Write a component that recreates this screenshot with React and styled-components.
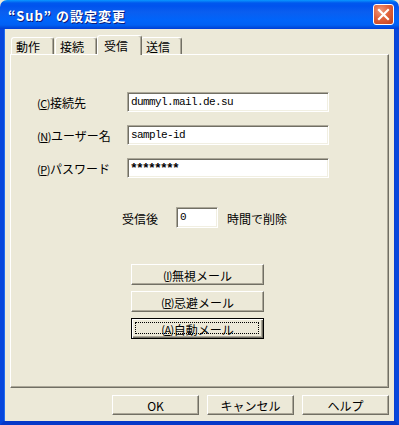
import React from 'react';
import styled, { createGlobalStyle } from 'styled-components';

const Global = createGlobalStyle`
  html, body {
    margin: 0;
    padding: 0;
    background: #ece9d8;
  }
  * { box-sizing: border-box; }
`;

const ui = `"Noto Sans CJK JP", "DejaVu Sans", sans-serif`;

const Window = styled.div`
  width: 399px;
  height: 425px;
  display: flex;
  flex-direction: column;
  font-family: ${ui};
  font-size: 12px;
  color: #000;
`;

const TitleBar = styled.div`
  height: 29px;
  flex: none;
  display: flex;
  align-items: center;
  justify-content: space-between;
  padding: 0 5px 0 8px;
  border-radius: 7px 7px 0 0;
  background: linear-gradient(to bottom,
    #0997ff 0px, #0058ee 3px, #0053ee 6px, #0a5ef0 12px,
    #0064fa 20px, #0060f4 25px, #0050e0 27px, #003dd7 29px);
`;

const Title = styled.span`
  color: #fff;
  font-weight: bold;
  font-size: 13px;
  letter-spacing: 1px;
  text-shadow: 1px 1px 0 #0a1b7a;
  margin-top: 1px;
`;

const CloseBtn = styled.div`
  width: 21px;
  height: 21px;
  border: 1px solid #fff;
  border-radius: 3px;
  background: radial-gradient(circle at 35% 30%, #f09a7c 0%, #e0623c 45%, #c0401c 100%);
  display: flex;
  align-items: center;
  justify-content: center;
`;

const Body = styled.div`
  flex: 1;
  display: flex;
  flex-direction: column;
  background: #ece9d8;
  border-left: 4px solid #0646dc;
  border-right: 4px solid #0646dc;
  border-bottom: 4px solid #0638c8;
  box-shadow: inset 1px 0 0 #1f6cf0, inset -1px 0 0 #0a3fd0;
  padding: 6px 5px 0 6px;
`;

const TabRow = styled.div`
  display: flex;
  align-items: flex-end;
  height: 19px;
  padding-left: 1px;
  position: relative;
  z-index: 1;
`;

const Tab = styled.div`
  width: ${p => p.$w}px;
  height: ${p => (p.$active ? 20 : 17)}px;
  margin-left: ${p => (p.$active ? -1 : 0)}px;
  margin-right: ${p => (p.$active ? -1 : 1)}px;
  margin-bottom: ${p => (p.$active ? -1 : 0)}px;
  background: #ece9d8;
  border-top: 1px solid #fff;
  border-left: 1px solid #fff;
  border-right: 1px solid #716f64;
  box-shadow: inset -1px 0 0 #aca899;
  border-radius: 3px 3px 0 0;
  display: flex;
  align-items: center;
  padding-left: ${p => (p.$active ? 6 : 4)}px;
  padding-top: ${p => (p.$active ? 0 : 1)}px;
  position: relative;
  z-index: ${p => (p.$active ? 2 : 0)};
`;

const Panel = styled.div`
  width: 379px;
  height: 334px;
  border-top: 1px solid #fff;
  border-left: 1px solid #fff;
  border-right: 1px solid #716f64;
  border-bottom: 1px solid #716f64;
  box-shadow: inset -1px -1px 0 #aca899;
  padding: 37px 0 0 26px;
  display: flex;
  flex-direction: column;
`;

const Fields = styled.div`
  display: grid;
  grid-template-columns: 90px 202px;
  row-gap: 13px;
  align-items: center;
`;

const Label = styled.span`
  white-space: nowrap;
  padding-top: 1px;
`;

const Field = styled.div`
  height: ${p => p.$h || 20}px;
  width: ${p => p.$w || 202}px;
  background: #fff;
  border-top: 1px solid #aca899;
  border-left: 1px solid #aca899;
  border-right: 1px solid #fff;
  border-bottom: 1px solid #fff;
  box-shadow: inset 1px 1px 0 #716f64, inset -1px -1px 0 #f1efe2;
  padding: ${p => (p.$mask ? '2px 0 0 2px' : '1px 0 0 3px')};
  font-family: "Liberation Mono", "DejaVu Sans Mono", monospace;
  font-size: ${p => (p.$mask ? 13 : 11)}px;
  font-weight: ${p => (p.$mask ? 'bold' : 'normal')};
  letter-spacing: ${p => (p.$mask ? -1.8 : -0.6)}px;
  line-height: 16px;
  white-space: nowrap;
  overflow: hidden;
`;

const DeleteRow = styled.div`
  display: flex;
  align-items: center;
  margin: 29px 0 0 85px;
`;

const Inline = styled.span`
  margin: ${p => p.$m || '0'};
  padding-top: 1px;
`;

const ButtonStack = styled.div`
  display: flex;
  flex-direction: column;
  gap: 6px;
  margin: 36px 0 0 94px;
`;

const Button = styled.div`
  width: ${p => p.$w || 133}px;
  height: ${p => p.$h || 21}px;
  background: #ece9d8;
  border-top: 1px solid #fff;
  border-left: 1px solid #fff;
  border-right: 1px solid #716f64;
  border-bottom: 1px solid #716f64;
  box-shadow: inset -1px -1px 0 #aca899;
  display: flex;
  align-items: center;
  justify-content: center;
  padding-top: 1px;
  position: relative;
  ${p => p.$default && `
    border: 1px solid #000;
    box-shadow: inset 1px 1px 0 #fff, inset -1px -1px 0 #716f64, inset -2px -2px 0 #aca899;
    &::after {
      content: '';
      position: absolute;
      left: 3px; top: 3px; right: 4px; bottom: 4px;
      border: 1px dotted #000;
    }
  `}
`;

const Footer = styled.div`
  display: flex;
  justify-content: flex-end;
  gap: 8px;
  margin-top: 7px;
  width: 379px;
`;

const Paren = styled.span`
  font-size: 11px;
  letter-spacing: -0.5px;
`;

const Key = ({ k }) => (
  <Paren>(<u>{k}</u>)</Paren>
);

function CloseIcon() {
  return (
    <svg width="13" height="13" viewBox="0 0 13 13">
      <path d="M2 2 L11 11 M11 2 L2 11" stroke="#fff" strokeWidth="2.2" strokeLinecap="square" />
    </svg>
  );
}

export default function App() {
  return (
    <>
      <Global />
      <Window>
        <TitleBar>
          <Title>“Sub” の設定変更</Title>
          <CloseBtn><CloseIcon /></CloseBtn>
        </TitleBar>
        <Body>
          <TabRow>
            <Tab $w={43}>動作</Tab>
            <Tab $w={42}>接続</Tab>
            <Tab $w={45} $active>受信</Tab>
            <Tab $w={41}>送信</Tab>
          </TabRow>
          <Panel>
            <Fields>
              <Label><Key k="C" />接続先</Label>
              <Field>dummyl.mail.de.su</Field>
              <Label><Key k="N" />ユーザー名</Label>
              <Field>sample-id</Field>
              <Label><Key k="P" />パスワード</Label>
              <Field $mask>********</Field>
            </Fields>
            <DeleteRow>
              <Inline>受信後</Inline>
              <Field $w={42} $h={21} style={{ marginLeft: 18 }}>0</Field>
              <Inline $m="0 0 0 9px">時間で削除</Inline>
            </DeleteRow>
            <ButtonStack>
              <Button><Key k="I" />無視メール</Button>
              <Button><Key k="R" />忌避メール</Button>
              <Button $default><Key k="A" />自動メール</Button>
            </ButtonStack>
          </Panel>
          <Footer>
            <Button $w={87} $h={20}>OK</Button>
            <Button $w={87} $h={20}>キャンセル</Button>
            <Button $w={87} $h={20}>ヘルプ</Button>
          </Footer>
        </Body>
      </Window>
    </>
  );
}
